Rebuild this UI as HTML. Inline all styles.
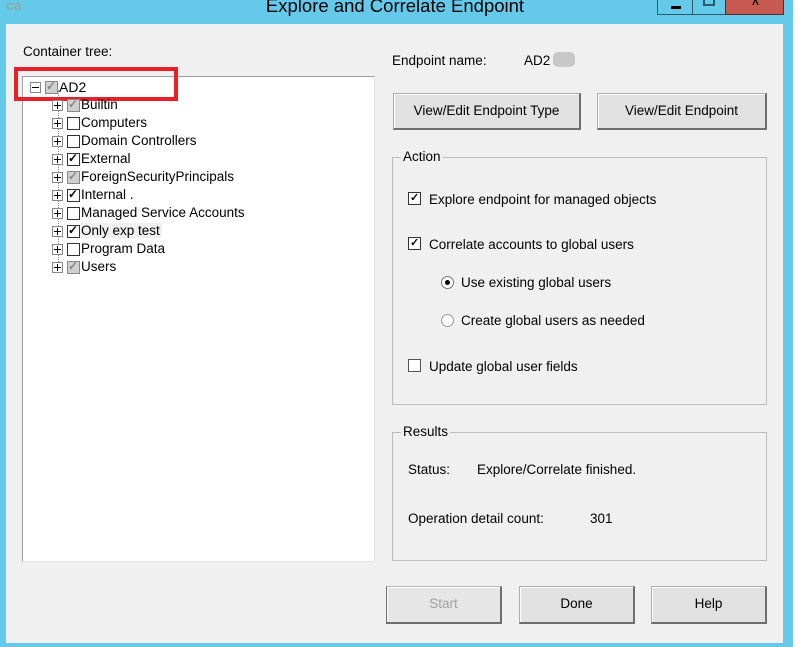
<!DOCTYPE html>
<html><head><style>
*{margin:0;padding:0;box-sizing:border-box}
body{width:795px;height:647px;background:#65c9e9;position:relative;overflow:hidden;font-family:"Liberation Sans",sans-serif;font-size:13.5px;color:#000}
.a{position:absolute}
#c{left:6px;top:24px;width:777px;height:619px;background:#f0f0f0}
.btn{position:absolute;background:#e1e1e1;border:1px solid #adadad;border-right:2px solid #6e6e6e;border-bottom:2px solid #6e6e6e;box-shadow:inset 1px 1px 0 #fff;text-align:center;font-size:13.5px}
.grp{position:absolute;border:1px solid #bcbcbc}
.leg{position:absolute;top:-9px;left:8px;background:#f0f0f0;padding:0 2px}
.cb{position:absolute;width:13px;height:13px;border:1px solid #333;background:#fff}
.cb.g{background:#d0d0d0;border-color:#888}
.pl{position:absolute;width:11px;height:11px;border:1px solid #888;background:#fff}
.pl::before{content:"";position:absolute;left:1px;top:4px;width:7px;height:1px;background:#000}
.pl.p::after{content:"";position:absolute;left:4px;top:1px;width:1px;height:7px;background:#000}
.chk{position:absolute;width:13px;height:13px;border:1px solid #333;background:#fff}
</style></head><body>
<div class="a" style="left:6px;top:0;width:22px;height:14px;font:bold 14px 'Liberation Sans';color:#8aa;line-height:10px">ca</div>
<div class="a" style="left:0;width:790px;top:-5px;text-align:center;font-size:18.5px;color:#000">Explore and Correlate Endpoint</div>
<div class="a" style="left:657px;top:0;width:36px;height:15px;border:1px solid #2b5a6a;border-top:0"><div class="a" style="left:13px;top:6px;width:10px;height:3px;background:#000"></div></div>
<div class="a" style="left:692px;top:0;width:34px;height:15px;border:1px solid #2b5a6a;border-top:0"><div class="a" style="left:10px;top:0;width:12px;height:6px;border:2px solid #2b5a6a;border-top:0"></div></div>
<div class="a" style="left:725px;top:0;width:59px;height:15px;background:#c75a50;border:1px solid #5a2a2a;border-top:0"><div class="a" style="left:26px;top:0;font-size:12px;font-weight:bold;line-height:8px">^</div></div>
<div class="a" style="left:793px;top:0;width:2px;height:647px;background:#fff"></div>
<div class="a" id="c"></div>

<div class="a" style="left:23px;top:44px">Container tree:</div>
<div class="a" style="left:22px;top:76px;width:353px;height:486px;background:#fff;border:1px solid #e3e3e3;border-left-color:#a0a0a0;border-top-color:#a0a0a0"></div>
<div class="a" style="left:58px;top:90px;height:178px;border-left:1px dotted #888"></div>
<div class="pl" style="left:30px;top:82px"></div>
<div class="cb g" style="left:45px;top:81px"><span style="position:absolute;left:0;top:-3px;font-size:12px;font-weight:bold;color:#888">✓</span></div>
<div class="a" style="left:59px;top:79px;font-size:14px">AD2</div>
<div class="a" style="left:14px;top:67px;width:164px;height:34px;border:4px solid #e8202a"></div>

<div id="tree"></div>
<script>
var items=[["Builtin","g"],["Computers",""],["Domain Controllers",""],["External","c"],["ForeignSecurityPrincipals","g"],["Internal .","c"],["Managed Service Accounts",""],["Only exp test","c"],["Program Data",""],["Users","g"]];
var h="";items.forEach(function(it,i){var y=99+i*18;
h+='<div class="pl p" style="left:52px;top:'+(y+1)+'px"></div>';
h+='<div class="cb'+(it[1]=="g"?" g":"")+'" style="left:67px;top:'+y+'px">'+(it[1]?'<span style="position:absolute;left:0;top:-3px;font-size:12px;font-weight:bold;color:'+(it[1]=="g"?"#888":"#000")+'">✓</span>':'')+'</div>';
h+='<div class="a" style="left:81px;top:'+(y-2)+'px;'+(i==7?'background:#f0f0f0;padding-right:2px':'')+'">'+it[0]+'</div>';});
document.getElementById("tree").innerHTML=h;
</script>

<div class="a" style="left:392px;top:53px">Endpoint name:</div>
<div class="a" style="left:524px;top:53px">AD2</div>
<div class="a" style="left:553px;top:52px;width:22px;height:15px;background:#c8c8c8;border-radius:5px"></div>
<div class="btn" style="left:393px;top:93px;width:188px;height:37px;line-height:33px">View/Edit Endpoint Type</div>
<div class="btn" style="left:597px;top:93px;width:170px;height:37px;line-height:33px">View/Edit Endpoint</div>

<div class="grp" style="left:392px;top:157px;width:375px;height:248px"><div class="leg">Action</div></div>
<div class="chk" style="left:408px;top:192px"><span style="position:absolute;left:1px;top:-2px;font-size:11px;font-weight:bold">✓</span></div>
<div class="a" style="left:429px;top:192px">Explore endpoint for managed objects</div>
<div class="chk" style="left:408px;top:237px"><span style="position:absolute;left:1px;top:-2px;font-size:11px;font-weight:bold">✓</span></div>
<div class="a" style="left:429px;top:237px">Correlate accounts to global users</div>
<div class="a" style="left:441px;top:276px;width:13px;height:13px;border-radius:50%;border:1px solid #777;background:#fff"><div class="a" style="left:3px;top:3px;width:5px;height:5px;border-radius:50%;background:#000"></div></div>
<div class="a" style="left:461px;top:275px">Use existing global users</div>
<div class="a" style="left:441px;top:314px;width:13px;height:13px;border-radius:50%;border:1px solid #999;background:#fff"></div>
<div class="a" style="left:461px;top:313px">Create global users as needed</div>
<div class="chk" style="left:408px;top:359px;border-color:#555"></div>
<div class="a" style="left:429px;top:359px">Update global user fields</div>

<div class="grp" style="left:392px;top:432px;width:375px;height:129px"><div class="leg">Results</div></div>
<div class="a" style="left:408px;top:462px">Status:</div>
<div class="a" style="left:477px;top:462px">Explore/Correlate finished.</div>
<div class="a" style="left:408px;top:511px">Operation detail count:</div>
<div class="a" style="left:590px;top:511px">301</div>

<div class="btn" style="left:386px;top:586px;width:116px;height:38px;line-height:34px;color:#a0a0a0;background:#e6e6e6;border-color:#bbb #6e6e6e #6e6e6e #6e6e6e">Start</div>
<div class="btn" style="left:519px;top:586px;width:116px;height:38px;line-height:34px">Done</div>
<div class="btn" style="left:651px;top:586px;width:116px;height:38px;line-height:34px">Help</div>
</body></html>
